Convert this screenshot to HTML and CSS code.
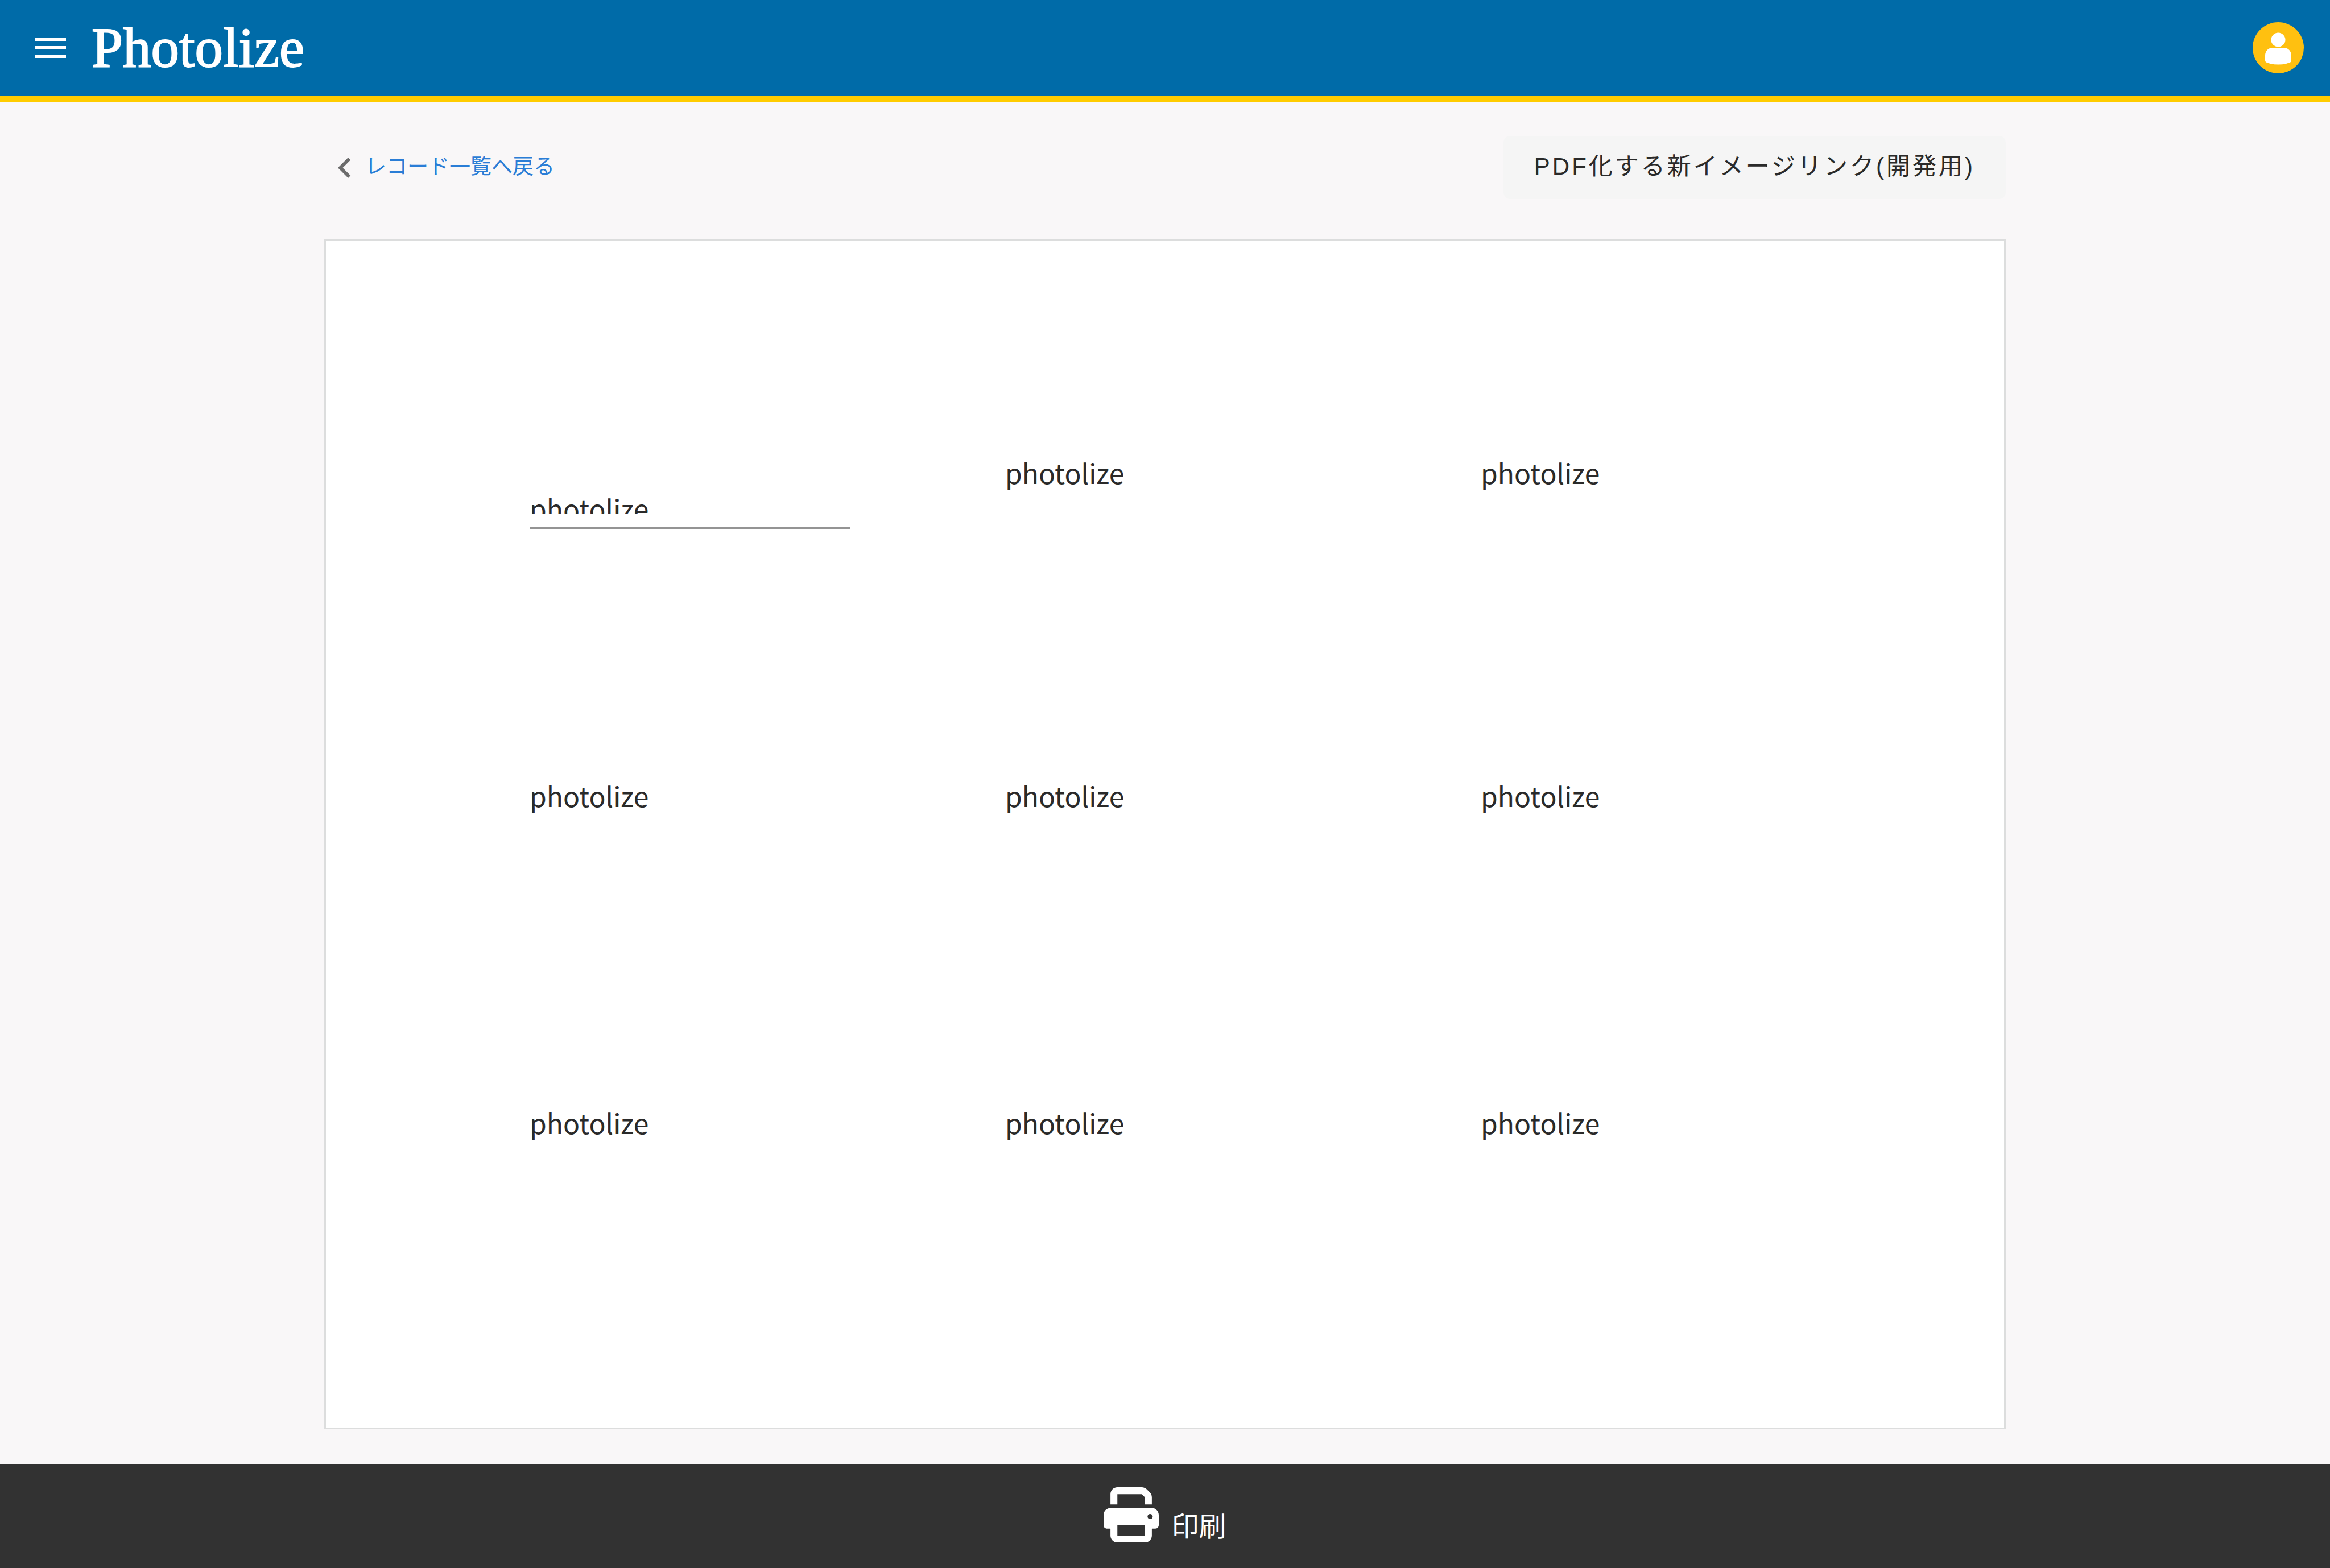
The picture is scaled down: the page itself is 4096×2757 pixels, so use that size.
FILE: index.html
```html
<!DOCTYPE html>
<html lang="ja">
<head>
<meta charset="utf-8">
<title>Photolize</title>
<link rel="stylesheet" href="styles.css">
</head>
<body>
<header class="app-bar">
  <button class="icon-button" type="button" aria-label="メニュー">
    <svg class="icon" viewBox="0 0 24 24" aria-hidden="true"><path d="M3,6H21V8H3V6M3,11H21V13H3V11M3,16H21V18H3V16Z"/></svg>
  </button>
  <a class="brand" href="#">Photolize</a>
  <button class="avatar" type="button" aria-label="アカウント">
    <svg viewBox="0 0 90 90" aria-hidden="true">
      <circle cx="45" cy="45" r="45" fill="#ffc010"/>
      <circle cx="45" cy="31" r="12.5" fill="#fff"/>
      <path fill="#fff" d="M36 45C27 45 22 51 22 59V67Q22 70 25 71L31 73Q45 76 59 73L65 71Q68 70 68 67V59C68 51 63 45 54 45Q45 47 36 45Z"/>
    </svg>
  </button>
</header>

<main class="page">
  <div class="toolbar">
    <a class="back-link" href="#">
      <svg class="icon" viewBox="0 0 24 24" aria-hidden="true"><path d="M15.41,16.58L10.83,12L15.41,7.41L14,6L8,12L14,18L15.41,16.58Z"/></svg>
      <span class="back-label">レコード一覧へ戻る</span>
    </a>
    <button class="pdf-button" type="button">PDF化する新イメージリンク(開発用)</button>
  </div>

  <section class="sheet">
    <div class="field">
      <textarea class="field-input" aria-label="photolize" rows="1">photolize</textarea>
    </div>
    <p class="cell">photolize</p>
    <p class="cell">photolize</p>
    <p class="cell">photolize</p>
    <p class="cell">photolize</p>
    <p class="cell">photolize</p>
    <p class="cell">photolize</p>
    <p class="cell">photolize</p>
    <p class="cell">photolize</p>
  </section>
</main>

<footer class="print-bar">
  <button class="print-button" type="button">
    <svg class="print-icon" viewBox="0 0 512 512" aria-hidden="true"><path d="M128 0C92.700 0 64 28.700 64 64v96h64V64h226.700L384 93.300V160h64V93.300c0-17-6.700-33.300-18.700-45.300L400 18.700C388 6.700 371.700 0 354.700 0H128zM384 352v32 64H128V384 368 352H384zm64 32h32c17.700 0 32-14.300 32-32V256c0-35.300-28.700-64-64-64H64c-35.300 0-64 28.700-64 64v96c0 17.700 14.300 32 32 32H64v64c0 35.300 28.700 64 64 64H384c35.300 0 64-28.700 64-64V384zM432 248a24 24 0 1 1 0 48 24 24 0 1 1 0-48z"/></svg>
    <span>印刷</span>
  </button>
</footer>
</body>
</html>
```
FILE: styles.css
```css
* {
  box-sizing: border-box;
}

body {
  display: flex;
  flex-direction: column;
  min-height: 100vh;
  margin: 0;
  background: #f9f7f8;
  color: #2a2a2a;
  font-family: "Noto Sans CJK JP", sans-serif;
  font-size: 48px;
  line-height: 72px;
}

button {
  padding: 0;
  border: 0;
  background: none;
  color: inherit;
  font: inherit;
  cursor: pointer;
}

a {
  text-decoration: none;
}

svg {
  display: block;
}

.icon {
  width: 72px;
  height: 72px;
  fill: currentColor;
}

/* Top bar */
.app-bar {
  display: flex;
  align-items: center;
  height: 180px;
  padding: 0 46px 0 53px;
  border-bottom: 12px solid #ffcc00;
  background: #006ba8;
  color: #fff;
}

.brand {
  margin-left: 36px;
  color: #fff;
  font-family: "Liberation Serif", serif;
  font-size: 99px;
  line-height: 108px;
  -webkit-text-stroke: 2px #fff;
}

.avatar {
  width: 90px;
  height: 90px;
  margin-left: auto;
}

/* Page content */
.page {
  flex: 1;
  width: 2956px;
  max-width: 100%;
  margin: 0 auto;
  padding: 59px 0 60px;
}

.toolbar {
  display: flex;
  align-items: center;
  justify-content: space-between;
  margin-bottom: 71px;
}

.back-link {
  display: flex;
  align-items: center;
  color: #2a7dd6;
  font-size: 37px;
  line-height: 54px;
}

.back-link .icon {
  color: #6c6c6c;
}

.back-label {
  padding-bottom: 10px;
}

.pdf-button {
  height: 111px;
  padding: 0 54px 4px;
  border-radius: 12px;
  background: #f5f5f5;
  font-family: "Liberation Sans", "Noto Sans CJK JP", sans-serif;
  font-size: 42px;
  letter-spacing: 4px;
}

.sheet {
  display: grid;
  grid-template-columns: repeat(3, 1fr);
  grid-template-rows: 568px 575px auto;
  column-gap: 272px;
  align-items: start;
  min-height: 2092px;
  padding: 370px 356px 370px 358px;
  border: 3px solid #dcdddd;
  background: #fff;
}

.cell {
  margin: 0;
}

.field {
  margin-top: 63px;
  padding-bottom: 24px;
  border-bottom: 3px solid #949494;
}

.field-input {
  display: block;
  width: 100%;
  height: 46px;
  padding: 0;
  border: 0;
  outline: 0;
  overflow: hidden;
  resize: none;
  background: none;
  color: inherit;
  font: inherit;
}

/* Bottom bar */
.print-bar {
  display: flex;
  justify-content: center;
  padding: 40px 0 45px;
  background: #323232;
  color: #fff;
}

.print-button {
  display: flex;
  align-items: flex-end;
  gap: 22px;
  line-height: 64px;
}

.print-icon {
  width: 97px;
  height: 97px;
  fill: currentColor;
}
```
